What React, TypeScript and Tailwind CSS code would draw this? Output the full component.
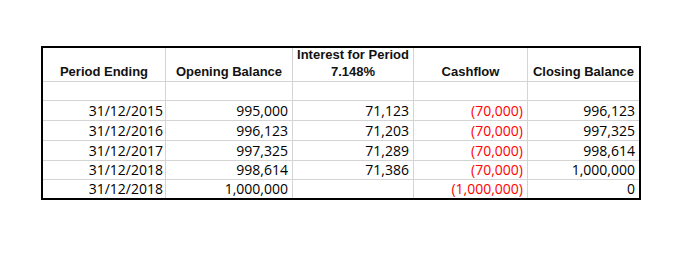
const headers = [
  ["Period Ending"],
  ["Opening Balance"],
  ["Interest for Period", "7.148%"],
  ["Cashflow"],
  ["Closing Balance"],
];

const rows = [
  ["31/12/2015", "995,000", "71,123", "(70,000)", "996,123"],
  ["31/12/2016", "996,123", "71,203", "(70,000)", "997,325"],
  ["31/12/2017", "997,325", "71,289", "(70,000)", "998,614"],
  ["31/12/2018", "998,614", "71,386", "(70,000)", "1,000,000"],
  ["31/12/2018", "1,000,000", "", "(1,000,000)", "0"],
];

const rowHeights = ["h-[20px]", "h-[20px]", "h-[20px]", "h-[19px]", "h-[18px]"];

export default function App() {
  return (
    <div className="w-[682px] h-[259px] bg-white pt-[46px] pl-[41px]">
      <div className="w-[600px] border-2 border-black grid grid-cols-[123px_127px_121px_114px_111px]">
        {/* header */}
        {headers.map((h, i) => (
          <div
            key={i}
            className={`h-[34px] border-b border-[#d4d4d4] flex flex-col justify-end items-center pb-[1px] font-bold text-[13px] leading-[17px] text-[#111] ${
              i < 4 ? "border-r" : ""
            }`}
            style={{ fontFamily: '"Liberation Sans", Arial, sans-serif' }}
          >
            {h.map((line) => (
              <span key={line}>{line}</span>
            ))}
          </div>
        ))}

        {/* empty row */}
        {headers.map((_, i) => (
          <div
            key={"e" + i}
            className={`h-[19px] border-b border-[#d4d4d4] ${i < 4 ? "border-r" : ""}`}
          />
        ))}

        {/* data */}
        {rows.map((r, ri) =>
          r.map((cell, ci) => (
            <div
              key={ri + "-" + ci}
              className={`${rowHeights[ri]} border-[#d4d4d4] flex items-center justify-end text-[14px] leading-none ${
                ci < 4 ? "border-r" : ""
              } ${ri < 4 ? "border-b" : ""} ${ci === 0 ? "pr-[2px]" : "pr-[4px]"} ${
                ci === 3 ? "text-[#ff0000]" : "text-black"
              }`}
              style={{ fontFamily: '"Open Sans", sans-serif' }}
            >
              {cell}
            </div>
          ))
        )}
      </div>
    </div>
  );
}
